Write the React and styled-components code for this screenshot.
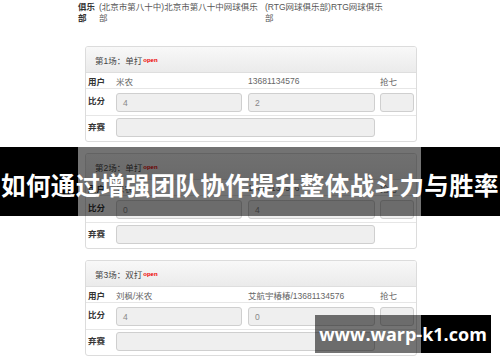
import React from "react";
import styled, { createGlobalStyle } from "styled-components";

const Global = createGlobalStyle`
  html, body { margin: 0; padding: 0; background: #fff; overflow: hidden; }
  body { width: 500px; height: 362px; font-family: "Liberation Sans", "Noto Sans CJK SC", sans-serif; }
`;

const Page = styled.div`
  position: relative;
  width: 500px;
  height: 362px;
  overflow: hidden;
  background: #fff;
`;

const Content = styled.div`
  margin-left: 78px;
  width: 343px;
  padding-top: 2px;
`;

const ClubRow = styled.div`
  display: grid;
  grid-template-columns: 21px 166px 140px;
  font-size: 8.5px;
  line-height: 11px;
  color: #555;
`;

const ClubLabel = styled.div`
  font-weight: bold;
  color: #333;
`;

const Line = styled.span`
  display: block;
  white-space: nowrap;
`;

const Panels = styled.div`
  margin-top: 22px;
  margin-left: 7px;
  width: 332px;
  display: flex;
  flex-direction: column;
  gap: 11px;
`;

const Panel = styled.div`
  border: 1px solid #dcdcdc;
  border-radius: 3px;
  background: #fff;
  overflow: hidden;
`;

const Header = styled.div`
  height: 25px;
  display: flex;
  align-items: center;
  padding-left: 9px;
  background: linear-gradient(#f8f8f8, #ebebeb);
  border-bottom: 1px solid #dedede;
  font-size: 8.5px;
  color: #444;
`;

const Open = styled.sup`
  color: #e00;
  font-size: 6px;
  font-weight: bold;
  margin-left: 1px;
  vertical-align: 3px;
`;

const Row = styled.div`
  display: grid;
  grid-template-columns: 30px 132px 132px 34px;
  height: ${(p) => p.$h}px;
  align-items: ${(p) => (p.$center ? "center" : "start")};
  border-bottom: ${(p) => (p.$last ? "none" : "1px solid #e6e6e6")};
  box-sizing: border-box;
  font-size: 8.5px;
  color: #666;
`;

const Label = styled.div`
  padding-left: 2px;
  padding-top: ${(p) => p.$pt || 0}px;
  font-weight: bold;
  color: #333;
  white-space: nowrap;
`;

const Cell = styled.div`
  white-space: nowrap;
`;

const Input = styled.div`
  box-sizing: border-box;
  width: ${(p) => p.$w}px;
  height: 19px;
  margin-top: ${(p) => p.$mt}px;
  grid-column: ${(p) => p.$span || "auto"};
  background: #efefef;
  border: 1px solid #cfcfcf;
  border-radius: 3px;
  padding-left: 6px;
  display: flex;
  align-items: center;
  font-size: 8.5px;
  color: #888;
`;

const Banner = styled.div`
  position: absolute;
  left: 0;
  top: 147px;
  width: 500px;
  height: 69px;
  background: linear-gradient(to right, #000 0 78px, rgba(0,0,0,0.55) 78px 421px, #000 421px);
  display: flex;
  align-items: center;
  justify-content: center;
  padding-top: 6px;
  box-sizing: border-box;
`;

const Title = styled.div`
  color: #fff;
  font-family: "Noto Sans CJK SC", sans-serif;
  font-weight: bold;
  font-size: 24.5px;
  letter-spacing: 0.4px;
  white-space: nowrap;
`;

const Mark = styled.div`
  position: absolute;
  left: 315px;
  top: 315px;
  width: 176px;
  height: 38px;
  background: linear-gradient(to right, rgba(0,0,0,0.55) 0 106px, #000 106px);
  display: flex;
  align-items: center;
  justify-content: center;
  color: #fff;
  font-family: "Open Sans", "DejaVu Sans", sans-serif;
  font-weight: bold;
  font-size: 18px;
`;

const matches = [
  { title: "第1场：单打", u1: "米农", u2: "13681134576", a: "4", b: "2" },
  { title: "第2场：单打", u1: "米农", u2: "13681134576", a: "0", b: "4" },
  { title: "第3场：双打", u1: "刘枫/米农", u2: "艾航宇椿椿/13681134576", a: "4", b: "0" },
];

function Match({ m }) {
  return (
    <Panel>
      <Header>
        {m.title}
        <Open>open</Open>
      </Header>
      <Row $h={16} $center>
        <Label>用户</Label>
        <Cell>{m.u1}</Cell>
        <Cell>{m.u2}</Cell>
        <Cell>抢七</Cell>
      </Row>
      <Row $h={27}>
        <Label $pt={5}>比分</Label>
        <Input $w={126} $mt={4}>{m.a}</Input>
        <Input $w={127} $mt={4}>{m.b}</Input>
        <Input $w={34} $mt={4} />
      </Row>
      <Row $h={25} $last>
        <Label $pt={4}>弃赛</Label>
        <Input $w={259} $mt={2} $span="2 / 4" />
      </Row>
    </Panel>
  );
}

export default function App() {
  return (
    <Page>
      <Global />
      <Content>
        <ClubRow>
          <ClubLabel>
            <Line>俱乐</Line>
            <Line>部</Line>
          </ClubLabel>
          <div>
            <Line>(北京市第八十中)北京市第八十中网球俱乐</Line>
            <Line>部</Line>
          </div>
          <div>
            <Line>(RTG网球俱乐部)RTG网球俱乐</Line>
            <Line>部</Line>
          </div>
        </ClubRow>
        <Panels>
          {matches.map((m) => (
            <Match key={m.title} m={m} />
          ))}
        </Panels>
      </Content>
      <Banner>
        <Title>如何通过增强团队协作提升整体战斗力与胜率</Title>
      </Banner>
      <Mark>www.warp-k1.com</Mark>
    </Page>
  );
}
